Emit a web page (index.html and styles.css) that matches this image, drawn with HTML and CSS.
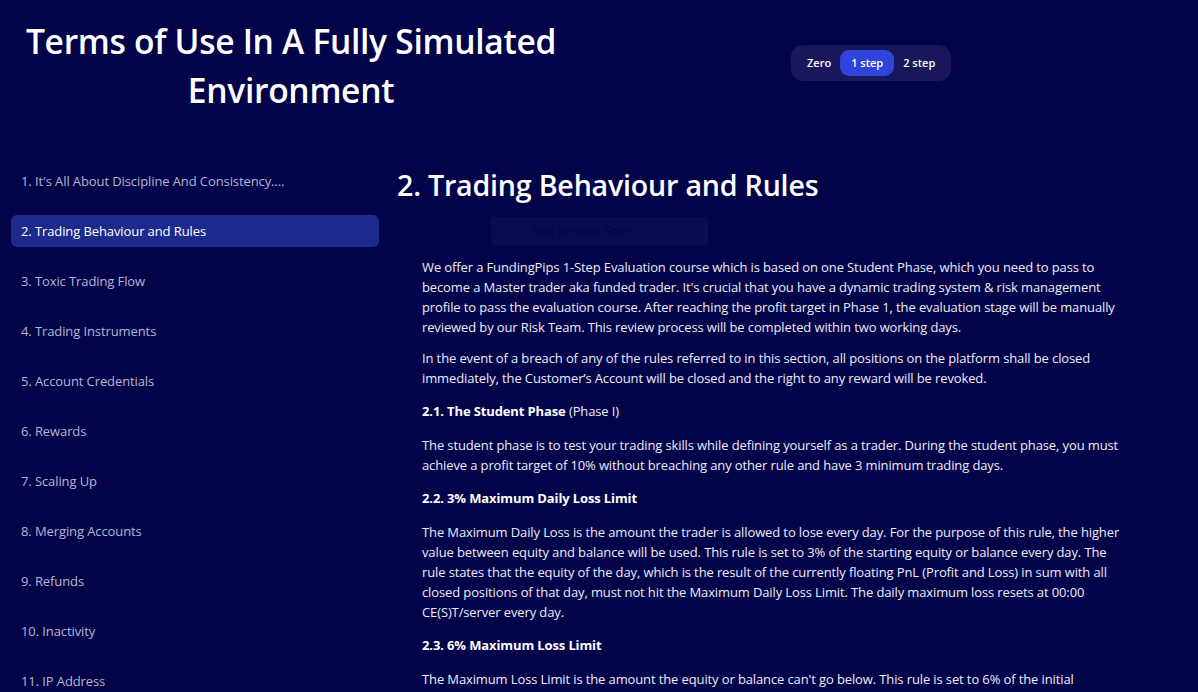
FILE: index.html
```html
<!DOCTYPE html>
<html lang="en">
<head>
<meta charset="utf-8">
<title>Terms of Use</title>
<link rel="stylesheet" href="styles.css">
</head>
<body>
<header class="top">
  <h1 class="title">Terms of Use In A Fully Simulated Environment</h1>
  <div class="toggle-wrap">
    <div class="toggle">
      <span class="opt">Zero</span>
      <span class="opt active">1 step</span>
      <span class="opt">2 step</span>
    </div>
  </div>
</header>
<div class="layout">
  <nav class="sidebar">
    <a class="item">1. It's All About Discipline And Consistency....</a>
    <a class="item active">2. Trading Behaviour and Rules</a>
    <a class="item">3. Toxic Trading Flow</a>
    <a class="item">4. Trading Instruments</a>
    <a class="item">5. Account Credentials</a>
    <a class="item">6. Rewards</a>
    <a class="item">7. Scaling Up</a>
    <a class="item">8. Merging Accounts</a>
    <a class="item">9. Refunds</a>
    <a class="item">10. Inactivity</a>
    <a class="item">11. IP Address</a>
  </nav>
  <main class="content">
    <h2 class="section-title">2. Trading Behaviour and Rules</h2>
    <div class="snip">Full screen Snip</div>
    <div class="body">
      <p>We offer a FundingPips 1-Step Evaluation course which is based on one Student Phase, which you need to pass to become a Master trader aka funded trader. It's crucial that you have a dynamic trading system &amp; risk management profile to pass the evaluation course. After reaching the profit target in Phase 1, the evaluation stage will be manually reviewed by our Risk Team. This review process will be completed within two working days.</p>
      <p>In the event of a breach of any of the rules referred to in this section, all positions on the platform shall be closed immediately, the Customer’s Account will be closed and the right to any reward will be revoked.</p>
      <p class="sub"><strong>2.1. The Student Phase</strong> (Phase I)</p>
      <p>The student phase is to test your trading skills while defining yourself as a trader. During the student phase, you must achieve a profit target of 10% without breaching any other rule and have 3 minimum trading days.</p>
      <p class="sub"><strong>2.2. 3% Maximum Daily Loss Limit</strong></p>
      <p>The Maximum Daily Loss is the amount the trader is allowed to lose every day. For the purpose of this rule, the higher value between equity and balance will be used. This rule is set to 3% of the starting equity or balance every day. The rule states that the equity of the day, which is the result of the currently floating PnL (Profit and Loss) in sum with all closed positions of that day, must not hit the Maximum Daily Loss Limit. The daily maximum loss resets at 00:00 CE(S)T/server every day.</p>
      <p class="sub"><strong>2.3. 6% Maximum Loss Limit</strong></p>
      <p>The Maximum Loss Limit is the amount the equity or balance can't go below. This rule is set to 6% of the initial account balance and is calculated on the starting balance of the account, not on the highest balance reached.</p>
    </div>
  </main>
</div>
</body>
</html>
```
FILE: styles.css
```css
* { box-sizing: border-box; }
body {
  margin: 0;
  background: #03034a;
  color: #ececf6;
  font-family: "Open Sans", "Noto Sans", sans-serif;
}
.top {
  display: flex;
  align-items: flex-start;
  height: 165px;
}
.title {
  width: 582px;
  margin: 0;
  padding-top: 17px;
  text-align: center;
  font-size: 33.6px;
  line-height: 49px;
  font-weight: 600;
  color: #ffffff;
  letter-spacing: -0.3px;
}
.toggle-wrap {
  padding-left: 209px;
  padding-top: 45px;
}
.toggle {
  display: flex;
  align-items: center;
  height: 36px;
  padding: 0 7px;
  background: #17175a;
  border-radius: 12px;
}
.opt {
  font-size: 11px;
  font-weight: 600;
  color: #ffffff;
  padding: 0 9px;
  height: 26px;
  line-height: 26px;
  border-radius: 9px;
}
.opt.active {
  background: #2e44dc;
  padding: 0 11px;
}
.layout {
  display: grid;
  grid-template-columns: 379px 1fr;
  column-gap: 18px;
}
.sidebar {
  display: flex;
  flex-direction: column;
  gap: 18px;
  padding-left: 11px;
}
.item {
  display: block;
  height: 32px;
  line-height: 32px;
  padding: 0 10px;
  font-size: 13px;
  color: #b4b6d2;
  border-radius: 6px;
  white-space: nowrap;
  letter-spacing: -0.1px;
}
.item.active {
  background: #1c2a8c;
  color: #ffffff;
}
.content { padding-top: 2px; }
.section-title {
  margin: 0;
  font-size: 28.6px;
  line-height: 36px;
  font-weight: 600;
  color: #ffffff;
  letter-spacing: -0.2px;
}
.snip {
  width: 217px;
  height: 28px;
  margin: 14px 0 0 94px;
  background: #0a0a55;
  border-radius: 2px;
  color: #05054a;
  font-size: 14px;
  line-height: 28px;
  padding-left: 40px;
}
.body {
  padding: 12px 0 0 25px;
  width: 725px;
}
.body p {
  margin: 0 0 11px;
  font-size: 13px;
  line-height: 20px;
  color: #ececf6;
  letter-spacing: -0.12px;
}
.body p.sub { margin: 13px 0 14px; }
.body strong { font-weight: 700; color: #ffffff; }
```
